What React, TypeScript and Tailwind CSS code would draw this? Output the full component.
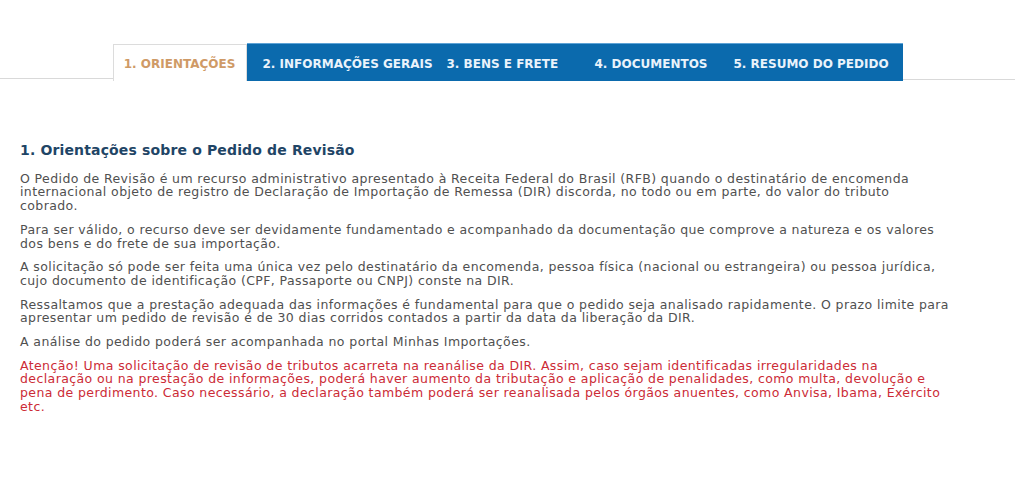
import React from 'react';

const tabs = [
  { label: '2. INFORMAÇÕES GERAIS', box: 'w-[192px] pl-[16px]' },
  { label: '3. BENS E FRETE', box: 'w-[144px] pl-[8px]' },
  { label: '4. DOCUMENTOS', box: 'w-[139px] pl-[12px]' },
  { label: '5. RESUMO DO PEDIDO', box: 'w-[181px] pl-[12px]' },
];

export default function App() {
  return (
    <div className="min-h-[504px] w-[1015px] bg-white font-['DejaVu_Sans',sans-serif] text-[#505050]">
      {/* Steps */}
      <div className="flex h-[38px] pt-[43px] box-content">
        <div className="flex-1 border-b border-[#d9d9d9] mb-[2px]" />
        <div className="w-[134px] mt-[1px] pt-[2px] border border-b-0 border-[#dcdcdc] bg-white flex items-center justify-center text-[12px] font-bold text-[#cf9a66]">
          1. ORIENTAÇÕES
        </div>
        <div className="flex bg-[#0b6aad] border-t border-[#5ea3d6]">
          {tabs.map((t) => (
            <div
              key={t.label}
              className={`${t.box} flex items-center pt-[2px] whitespace-nowrap text-[12px] font-bold text-[#eaf3fb]`}
            >
              {t.label}
            </div>
          ))}
        </div>
        <div className="flex-1 border-b border-[#d9d9d9] mb-[1px]" />
      </div>

      {/* Content */}
      <div className="px-[20px] pt-[63px] text-[12.5px] leading-[13.7px] tracking-[0.4px]">
        <h2 className="text-[14px] font-bold text-[#1f4566] mb-[14px] tracking-[0.15px]">
          1. Orientações sobre o Pedido de Revisão
        </h2>
        <p className="mb-[10px] whitespace-nowrap">
          O Pedido de Revisão é um recurso administrativo apresentado à Receita Federal do Brasil (RFB) quando o destinatário de encomenda
          <br />
          internacional objeto de registro de Declaração de Importação de Remessa (DIR) discorda, no todo ou em parte, do valor do tributo
          <br />
          cobrado.
        </p>
        <p className="mb-[10px] whitespace-nowrap">
          Para ser válido, o recurso deve ser devidamente fundamentado e acompanhado da documentação que comprove a natureza e os valores
          <br />
          dos bens e do frete de sua importação.
        </p>
        <p className="mb-[10px] whitespace-nowrap">
          A solicitação só pode ser feita uma única vez pelo destinatário da encomenda, pessoa física (nacional ou estrangeira) ou pessoa jurídica,
          <br />
          cujo documento de identificação (CPF, Passaporte ou CNPJ) conste na DIR.
        </p>
        <p className="mb-[10px] whitespace-nowrap">
          Ressaltamos que a prestação adequada das informações é fundamental para que o pedido seja analisado rapidamente. O prazo limite para
          <br />
          apresentar um pedido de revisão é de 30 dias corridos contados a partir da data da liberação da DIR.
        </p>
        <p className="mb-[10px] whitespace-nowrap">
          A análise do pedido poderá ser acompanhada no portal Minhas Importações.
        </p>
        <p className="whitespace-nowrap text-[#cc2b36]">
          Atenção! Uma solicitação de revisão de tributos acarreta na reanálise da DIR. Assim, caso sejam identificadas irregularidades na
          <br />
          declaração ou na prestação de informações, poderá haver aumento da tributação e aplicação de penalidades, como multa, devolução e
          <br />
          pena de perdimento. Caso necessário, a declaração também poderá ser reanalisada pelos órgãos anuentes, como Anvisa, Ibama, Exército
          <br />
          etc.
        </p>
      </div>
    </div>
  );
}
